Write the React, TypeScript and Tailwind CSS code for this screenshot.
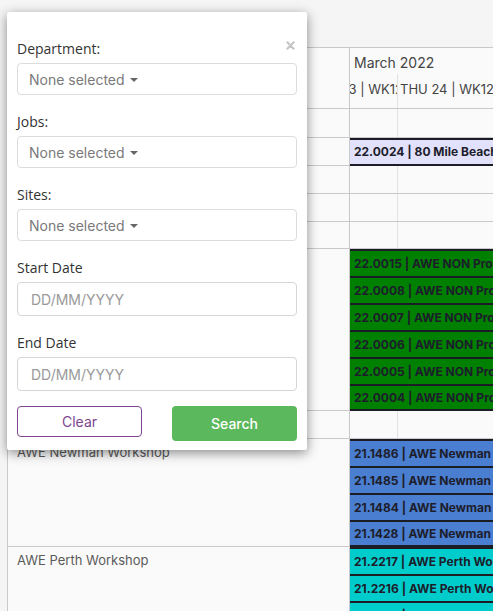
import React from 'react';

const POP = { fontFamily: 'Inter, "Noto Sans", sans-serif' };
const OPEN = { fontFamily: '"Open Sans", "Noto Sans", sans-serif' };

type Ev = { label: string; bg: string };

const GREEN: Ev[] = ['22.0015', '22.0008', '22.0007', '22.0006', '22.0005', '22.0004'].map(n => ({
  label: `${n} | AWE NON Prod`,
  bg: 'bg-[#008000]',
}));
const NEWMAN: Ev[] = ['21.1486', '21.1485', '21.1484', '21.1428'].map(n => ({
  label: `${n} | AWE Newman Workshop`,
  bg: 'bg-[#4a7ed0]',
}));
const PERTH: Ev[] = ['21.2217', '21.2216', '21.2215'].map(n => ({
  label: `${n} | AWE Perth Workshop`,
  bg: 'bg-[#00cccc]',
}));

function EmptyRow({ h }: { h: string }) {
  return (
    <div className={`flex ${h} border-b border-[#c9c9c9]`}>
      <div className="w-[342px] shrink-0 border-r border-[#c9c9c9]" />
      <div className="flex-1">
        <div className="w-[48px] h-full border-r border-[#e2e2e2]" />
      </div>
    </div>
  );
}

function EventBar({ ev, last }: { ev: Ev; last?: boolean }) {
  return (
    <div
      className={`h-[27px] border-t-2 ${last ? 'border-b-2' : ''} border-[#1c1c24] ${ev.bg} pl-[4px] flex items-center whitespace-nowrap overflow-hidden text-[12px] font-bold text-[#1d1d2b]`}
      style={POP}
    >
      {ev.label}
    </div>
  );
}

function GroupRow({ name, events, openEnd }: { name: string; events: Ev[]; openEnd?: boolean }) {
  return (
    <div className="flex">
      <div
        className="w-[342px] shrink-0 border-r border-b border-[#c9c9c9] pl-[9px] pt-[3px] text-[13px] leading-[20px] text-[#5a5a5a]"
        style={POP}
      >
        {name}
      </div>
      <div className="flex-1 overflow-hidden">
        {events.map((ev, i) => (
          <EventBar key={ev.label} ev={ev} last={!openEnd && i === events.length - 1} />
        ))}
      </div>
    </div>
  );
}

function SelectBox() {
  return (
    <div className="h-[32px] border border-[#dcdcdc] rounded-[4px] bg-white flex items-center pl-[11px] gap-[5px]">
      <span className="text-[14px] text-[#7a7a7a]" style={POP}>None selected</span>
      <span className="w-0 h-0 border-l-[4px] border-r-[4px] border-t-[4px] border-l-transparent border-r-transparent border-t-[#666] mt-[1px]" />
    </div>
  );
}

function DateBox() {
  return (
    <div className="h-[34px] border border-[#d6d6d6] rounded-[4px] bg-white flex items-center pl-[13px]">
      <span className="text-[14px] text-[#9a9a9a]" style={POP}>DD/MM/YYYY</span>
    </div>
  );
}

function Field({ label, children, mb = 'mb-[17px]' }: { label: string; children: React.ReactNode; mb?: string }) {
  return (
    <div className={mb}>
      <div className="text-[14px] leading-[20px] text-[#333] mb-[4px]" style={OPEN}>{label}</div>
      {children}
    </div>
  );
}

export default function App() {
  return (
    <div className="relative w-full h-[611px] overflow-hidden bg-[#f5f5f5]">
      {/* schedule table */}
      <div className="mt-[47px] ml-[7px] border-t border-l border-[#c9c9c9] bg-[#fafafa]">
        <div className="flex h-[61px] border-b border-[#c9c9c9]">
          <div className="w-[342px] shrink-0 border-r border-[#c9c9c9]" />
          <div className="flex-1 overflow-hidden text-[#444]" style={POP}>
            <div className="pl-[4px] pt-[5px] h-[26px] text-[14px] leading-[20px] whitespace-nowrap">March 2022</div>
            <div className="flex h-[34px] text-[13px] leading-[20px] whitespace-nowrap">
              <div className="w-[48px] shrink-0 border-r border-[#e2e2e2] overflow-hidden pt-[5px]">
                <span className="block -ml-[43px]">WED 23 | WK12</span>
              </div>
              <div className="pl-[2px] pt-[5px]">THU 24 | WK12</div>
            </div>
          </div>
        </div>
        <EmptyRow h="h-[29px]" />
        <div className="flex h-[28px]">
          <div className="w-[342px] shrink-0 border-r border-b border-[#c9c9c9]" />
          <div className="flex-1 overflow-hidden">
            <div
              className="h-[28px] border-y-2 border-[#1c1c24] bg-[#e1e1fb] pl-[4px] flex items-center whitespace-nowrap text-[12px] font-bold text-[#1d1d2b]"
              style={POP}
            >
              22.0024 | 80 Mile Beach
            </div>
          </div>
        </div>
        <EmptyRow h="h-[28px]" />
        <EmptyRow h="h-[28px]" />
        <EmptyRow h="h-[27px]" />
        <GroupRow name="" events={GREEN} />
        <EmptyRow h="h-[28px]" />
        <GroupRow name="AWE Newman Workshop" events={NEWMAN} />
        <GroupRow name="AWE Perth Workshop" events={PERTH} openEnd />
      </div>

      {/* filter popup */}
      <div className="absolute left-[7px] top-[12px] w-[300px] bg-white rounded-[2px] shadow-[0_3px_12px_rgba(0,0,0,0.45)] px-[10px] pt-[27px] pb-[9px]">
        <button className="absolute right-[12px] top-[28px] w-[10px] h-[10px] flex items-center justify-center">
          <svg viewBox="0 0 10 10" className="w-[9px] h-[9px]">
            <path d="M1.5 1.5 L8.5 8.5 M8.5 1.5 L1.5 8.5" stroke="#c6c6c6" strokeWidth="2.4" strokeLinecap="round" />
          </svg>
        </button>
        <Field label="Department:"><SelectBox /></Field>
        <Field label="Jobs:"><SelectBox /></Field>
        <Field label="Sites:"><SelectBox /></Field>
        <Field label="Start Date"><DateBox /></Field>
        <Field label="End Date" mb="mb-[15px]"><DateBox /></Field>
        <div className="flex items-start justify-between">
          <button
            className="w-[125px] h-[31px] border border-[#7e4690] rounded-[4px] bg-white text-[14px] text-[#7e4690]"
            style={POP}
          >
            Clear
          </button>
          <button
            className="w-[125px] h-[35px] rounded-[4px] bg-[#5cb85c] text-[14px] font-medium text-white"
            style={POP}
          >
            Search
          </button>
        </div>
      </div>
    </div>
  );
}
